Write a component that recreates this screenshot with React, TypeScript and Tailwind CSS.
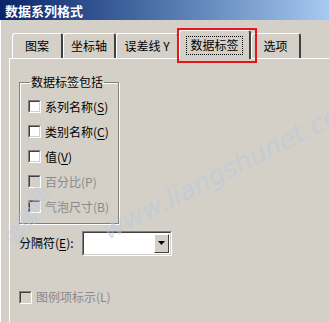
import React from "react";

const font = { fontFamily: '"Noto Sans CJK SC", "Noto Sans", sans-serif' };

function Check({ disabled }: { disabled?: boolean }) {
  return (
    <span className="inline-block w-[13px] h-[13px] border border-t-[#808080] border-l-[#808080] border-b-white border-r-white shrink-0">
      <span
        className={`block w-[11px] h-[11px] border border-t-[#404040] border-l-[#404040] border-b-[#d4d0c8] border-r-[#d4d0c8] ${
          disabled ? "bg-[#d4d0c8]" : "bg-white"
        }`}
      />
    </span>
  );
}

function Row({ label, k, disabled, u = true }: { label: string; k: string; disabled?: boolean; u?: boolean }) {
  return (
    <div className="flex items-center h-[25px] gap-[4px]">
      <Check disabled={disabled} />
      <span className={disabled ? "text-[#8a8a8a]" : "text-black"}>
        {label}(<span className={u ? "underline underline-offset-2" : ""}>{k}</span>)
      </span>
    </div>
  );
}

function Tab({ label, w, sel }: { label: string; w: string; sel?: boolean }) {
  if (sel) {
    return (
      <div className={`${w} h-[29px] -mb-[1px] relative z-10 bg-[#d4d0c8] border-l border-t border-white border-r-2 border-r-[#404040] rounded-t-[3px] flex items-center justify-center`}>
        <span className="border border-dotted border-black px-[3px] h-[19px] flex items-center leading-none">{label}</span>
      </div>
    );
  }
  return (
    <div className={`${w} h-[25px] bg-[#d4d0c8] border-l border-t border-white border-r-2 border-r-[#404040] rounded-t-[3px] flex items-center justify-center`}>
      <span className="leading-none">{label}</span>
    </div>
  );
}

export default function App() {
  return (
    <div className="w-[329px] h-[322px] bg-[#d4d0c8] overflow-hidden relative text-[12px] text-black" style={font}>
      <div className="h-[20px] bg-gradient-to-r from-[#0a246a] to-[#a6caf0] flex items-center pl-[5px]">
        <span className="text-white font-bold text-[13px] leading-none">数据系列格式</span>
      </div>
      <div className="border-l border-white h-[302px] pt-[10px] pl-[8px]">
        <div className="flex items-end pl-[3px] h-[28px]">
          <Tab label="图案" w="w-[51px]" />
          <Tab label="坐标轴" w="w-[53px]" />
          <Tab label="误差线 Y" w="w-[63px]" />
          <Tab label="数据标签" w="w-[72px]" sel />
          <Tab label="选项" w="w-[50px]" />
        </div>
        <div className="border-t border-l border-white h-[300px] pl-[9px] pt-[16px]">
          <fieldset className="w-[100px] h-[149px] border border-[#808080] shadow-[inset_1px_1px_0_#fff,1px_1px_0_#fff] pl-[8px] pt-[5px]">
            <legend className="ml-[2px] px-[1px] leading-[14px]">数据标签包括</legend>
            <Row label="系列名称" k="S" />
            <Row label="类别名称" k="C" />
            <Row label="值" k="V" />
            <Row label="百分比" k="P" disabled u={false} />
            <Row label="气泡尺寸" k="B" disabled u={false} />
          </fieldset>
          <div className="flex items-center mt-[6px] h-[26px]">
            <span className="w-[63px]">
              分隔符(<span className="underline underline-offset-2">E</span>):
            </span>
            <div className="w-[90px] h-[25px] border border-t-[#808080] border-l-[#808080] border-b-white border-r-white">
              <div className="h-full border border-t-[#404040] border-l-[#404040] border-b-[#d4d0c8] border-r-[#d4d0c8] bg-white flex justify-end p-[1px]">
                <div className="w-[15px] h-full bg-[#d4d0c8] border border-t-white border-l-white border-b-[#404040] border-r-[#404040] flex items-center justify-center">
                  <svg width="7" height="4" viewBox="0 0 7 4">
                    <path d="M0 0H7L3.5 4Z" fill="#000" />
                  </svg>
                </div>
              </div>
            </div>
          </div>
          <div className="flex items-center gap-[4px] mt-[31px] h-[20px]">
            <Check disabled />
            <span className="text-[#8a8a8a]">图例项标示(L)</span>
          </div>
        </div>
      </div>
      <div className="absolute left-[177px] top-[28px] w-[80px] h-[35px] border-2 border-[#e8141c] pointer-events-none z-20" />
      <div
        className="absolute left-[88px] top-[145px] w-[300px] text-[26px] italic text-[#b6cae0] opacity-50 -rotate-[27deg] pointer-events-none whitespace-nowrap"
        style={{ fontFamily: '"DejaVu Sans", sans-serif' }}
      >
        www.liangshunet.com
      </div>
      <div className="absolute left-[-6px] top-[200px] text-[22px] text-[#b8cce2] opacity-50 -rotate-[60deg] pointer-events-none whitespace-nowrap">
        梁顺网
      </div>
    </div>
  );
}
